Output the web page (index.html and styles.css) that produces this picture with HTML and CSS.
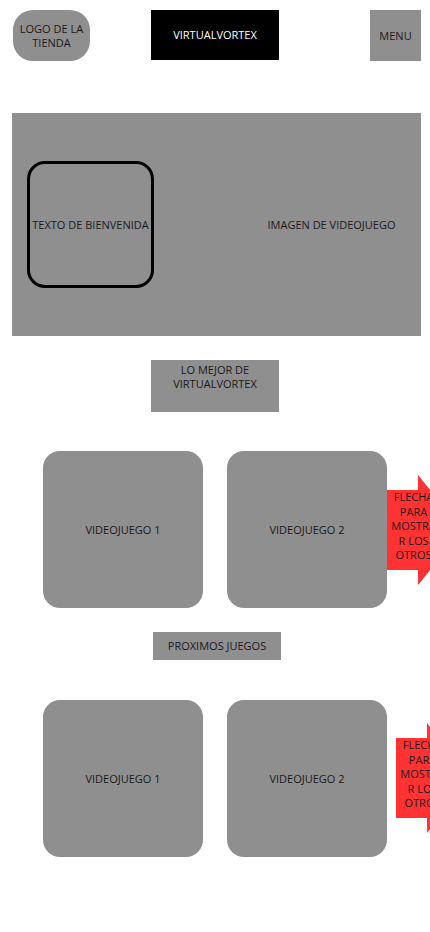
FILE: index.html
```html
<!DOCTYPE html>
<html lang="es">
<head>
<meta charset="utf-8">
<title>VirtualVortex</title>
<link rel="stylesheet" href="styles.css">
</head>
<body>
<header class="topbar">
  <div class="logo">LOGO DE LA TIENDA</div>
  <div class="brand">VIRTUALVORTEX</div>
  <div class="menu">MENU</div>
</header>

<section class="hero">
  <div class="welcome">TEXTO DE BIENVENIDA</div>
  <div class="hero-image">IMAGEN DE VIDEOJUEGO</div>
</section>

<h2 class="section-title best">LO MEJOR DE VIRTUALVORTEX</h2>
<div class="games-row">
  <div class="game-card">VIDEOJUEGO 1</div>
  <div class="game-card">VIDEOJUEGO 2</div>
  <div class="arrow arrow-first"><span class="arrow-text">FLECHA PARA MOSTRAR LOS OTROS</span></div>
</div>

<h2 class="section-title upcoming">PROXIMOS JUEGOS</h2>
<div class="games-row">
  <div class="game-card">VIDEOJUEGO 1</div>
  <div class="game-card">VIDEOJUEGO 2</div>
  <div class="arrow arrow-second"><span class="arrow-text">FLECHA PARA MOSTRAR LOS OTROS</span></div>
</div>
</body>
</html>
```

FILE: styles.css
```css
* { box-sizing: border-box; }

html, body {
  margin: 0;
  padding: 0;
  overflow-x: hidden;
  background: #ffffff;
}

body {
  width: 430px;
  min-height: 932px;
  font-family: "Open Sans", "DejaVu Sans", sans-serif;
  font-size: 11px;
  line-height: 14px;
  color: #1a1a1a;
}

.topbar {
  display: flex;
  align-items: flex-start;
  padding: 10px 0 0 13px;
}

.logo {
  width: 77px;
  height: 51px;
  border-radius: 20px;
  background: #8f8f8f;
  display: flex;
  align-items: center;
  justify-content: center;
  text-align: center;
  padding: 0 6px;
}

.brand {
  margin-left: 61px;
  width: 128px;
  height: 50px;
  background: #000000;
  color: #ffffff;
  display: flex;
  align-items: center;
  justify-content: center;
}

.menu {
  margin-left: 91px;
  width: 51px;
  height: 51px;
  background: #8f8f8f;
  display: flex;
  align-items: center;
  justify-content: center;
}

.hero {
  margin: 52px 0 0 12px;
  width: 409px;
  height: 223px;
  background: #8f8f8f;
  display: flex;
  align-items: center;
  padding-left: 15px;
}

.welcome {
  width: 127px;
  height: 127px;
  border: 3px solid #000000;
  border-radius: 18px;
  display: flex;
  align-items: center;
  justify-content: center;
  white-space: nowrap;
}

.hero-image {
  flex: 1;
  margin-left: 88px;
  text-align: center;
  white-space: nowrap;
}

.section-title {
  font-size: 11px;
  font-weight: normal;
  margin: 0;
  width: 128px;
  background: #8f8f8f;
  text-align: center;
}

.section-title.best {
  margin: 24px 0 0 151px;
  height: 52px;
  padding: 3px 12px 0;
}

.section-title.upcoming {
  margin: 24px 0 0 153px;
  height: 28px;
  line-height: 28px;
}

.games-row {
  display: flex;
  align-items: flex-start;
  margin-top: 39px;
  padding-left: 43px;
  gap: 24px;
}

.section-title.upcoming + .games-row {
  margin-top: 40px;
}

.game-card {
  flex: none;
  width: 160px;
  height: 157px;
  border-radius: 17px;
  background: #8f8f8f;
  display: flex;
  align-items: center;
  justify-content: center;
}

.arrow {
  flex: none;
  width: 76px;
  height: 110px;
  margin-top: 24px;
  background: #ff3333;
  clip-path: polygon(0 15px, 31px 15px, 31px 0, 76px 55px, 31px 110px, 31px 95px, 0 95px);
  padding: 15px 0 0 3px;
}

.arrow-first {
  margin-left: -24px;
}

.arrow-second {
  margin-left: -15px;
  margin-top: 23px;
}

.arrow-text {
  display: block;
  width: 47px;
  text-align: center;
  overflow-wrap: anywhere;
  line-height: 14.5px;
}
```
